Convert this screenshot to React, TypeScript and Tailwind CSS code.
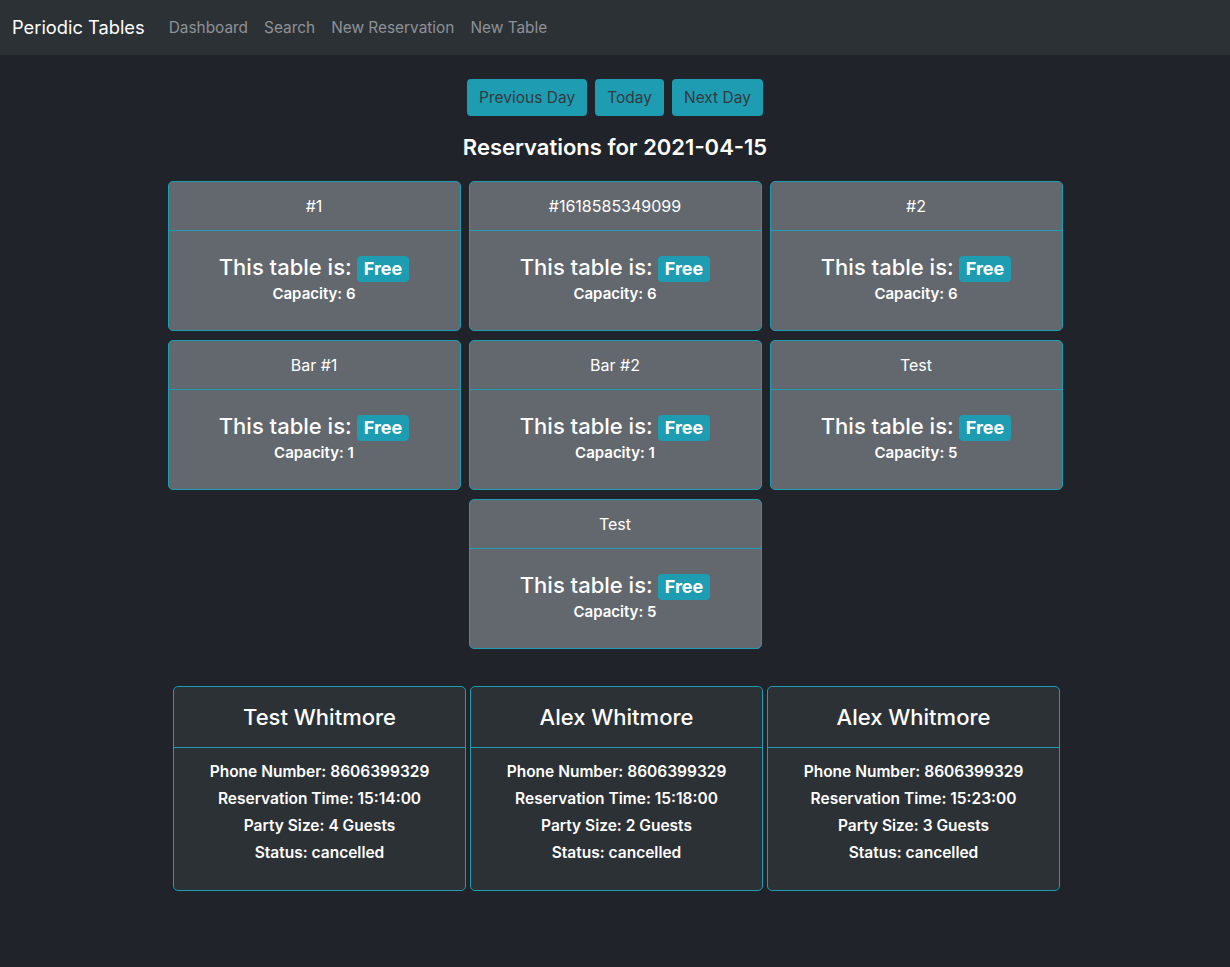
import React from 'react'

interface Table {
  name: string
  capacity: number
}

interface Reservation {
  name: string
  phone: string
  time: string
  people: number
  status: string
}

const tables: Table[] = [
  { name: '#1', capacity: 6 },
  { name: '#1618585349099', capacity: 6 },
  { name: '#2', capacity: 6 },
  { name: 'Bar #1', capacity: 1 },
  { name: 'Bar #2', capacity: 1 },
  { name: 'Test', capacity: 5 },
  { name: 'Test', capacity: 5 },
]

const reservations: Reservation[] = [
  { name: 'Test Whitmore', phone: '8606399329', time: '15:14:00', people: 4, status: 'cancelled' },
  { name: 'Alex Whitmore', phone: '8606399329', time: '15:18:00', people: 2, status: 'cancelled' },
  { name: 'Alex Whitmore', phone: '8606399329', time: '15:23:00', people: 3, status: 'cancelled' },
]

function TableCard({ table }: { table: Table }) {
  return (
    <div className="w-[293px] h-[150px] rounded-[5px] border border-[#1d9cb2] bg-[#62686e] text-white flex flex-col">
      <div className="h-[49px] border-b border-[#1d9cb2] flex items-center justify-center text-[16px]">
        {table.name}
      </div>
      <div className="flex flex-col items-center pt-[22px]">
        <div className="flex items-center text-[22px] font-medium leading-[29px]">
          <span>This table is:</span>
          <span className="ml-[5px] mt-[3px] rounded-[4px] bg-[#1d9cb2] px-[7px] text-[18px] font-bold leading-[26px]">
            Free
          </span>
        </div>
        <div className="text-[15px] font-semibold leading-[19px] mt-[2px]">Capacity: {table.capacity}</div>
      </div>
    </div>
  )
}

function ReservationCard({ res }: { res: Reservation }) {
  return (
    <div className="w-[293px] h-[205px] rounded-[5px] border border-[#1d9cb2] bg-[#2c3136] text-white flex flex-col">
      <div className="h-[61px] border-b border-[#1d9cb2] flex items-center justify-center text-[22px] font-medium">
        {res.name}
      </div>
      <div className="flex flex-col items-center pt-[10px] text-[15.5px] font-semibold leading-[27px]">
        <div>Phone Number: {res.phone}</div>
        <div>Reservation Time: {res.time}</div>
        <div>Party Size: {res.people} Guests</div>
        <div>Status: {res.status}</div>
      </div>
    </div>
  )
}

export default function App() {
  return (
    <div className="min-h-[967px] bg-[#20242a]" style={{ fontFamily: 'Inter, "Noto Sans", sans-serif' }}>
      {/* Navbar */}
      <nav className="h-[55px] bg-[#2c3136] flex items-center px-3">
        <span className="text-[18.3px] text-white mr-4">Periodic Tables</span>
        <div className="flex items-center text-[15.4px] text-[#8e9296]">
          <span className="px-2">Dashboard</span>
          <span className="px-2">Search</span>
          <span className="px-2">New Reservation</span>
          <span className="px-2">New Table</span>
        </div>
      </nav>

      {/* Day controls */}
      <div className="flex justify-center gap-2 pt-[24px]">
        <button className="h-[37px] px-3 rounded-[4px] bg-[#1d9cb2] text-[#343a40] text-[15.5px]">Previous Day</button>
        <button className="h-[37px] px-3 rounded-[4px] bg-[#1d9cb2] text-[#343a40] text-[15.5px]">Today</button>
        <button className="h-[37px] px-3 rounded-[4px] bg-[#1d9cb2] text-[#343a40] text-[15.5px]">Next Day</button>
      </div>

      <h4 className="text-center text-white text-[22px] font-semibold mt-[17px] leading-[28px]">
        Reservations for 2021-04-15
      </h4>

      {/* Tables */}
      <div className="mx-auto w-[895px] mt-[20px] flex flex-wrap justify-center gap-x-2 gap-y-[9px]">
        {tables.map((t, i) => (
          <TableCard key={i} table={t} />
        ))}
      </div>

      {/* Reservations */}
      <div className="flex justify-center gap-1 mt-[37px] pl-[3px]">
        {reservations.map((r, i) => (
          <ReservationCard key={i} res={r} />
        ))}
      </div>
    </div>
  )
}
